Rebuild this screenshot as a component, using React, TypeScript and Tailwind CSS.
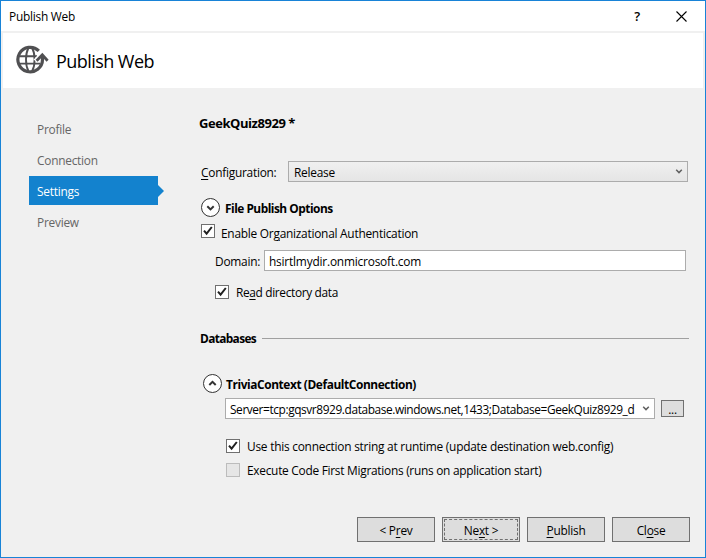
import type { ReactNode } from "react";

function Tick({ checked = true }: { checked?: boolean }) {
  return (
    <span
      className={`flex h-[14px] w-[14px] shrink-0 items-center justify-center border ${
        checked ? "border-[#707070] bg-white" : "border-[#bcbcbc] bg-[#e6e6e6]"
      }`}
    >
      {checked && (
        <svg width="12" height="12" viewBox="0 0 12 12" fill="none" stroke="#212121" strokeWidth="2">
          <path d="M2 5.6 4.6 8.6 9.8 2" />
        </svg>
      )}
    </span>
  );
}

function Expander({ up = false }: { up?: boolean }) {
  return (
    <svg className="shrink-0" width="19" height="19" viewBox="0 0 19 19" fill="none">
      <circle cx="9.5" cy="9.5" r="9" fill="#fff" stroke="#333" />
      <path d={up ? "M6.3 11 9.5 7.9 12.7 11" : "M6.3 8.3 9.5 11.4 12.7 8.3"} stroke="#333" strokeWidth="2" />
    </svg>
  );
}

function Arrow() {
  return (
    <svg className="shrink-0" width="8" height="6" viewBox="0 0 8 6" fill="none" stroke="#606060" strokeWidth="1.5">
      <path d="M1.2.8 4 3.6 6.8.8" />
    </svg>
  );
}

function Button({ children, focused = false }: { children: ReactNode; focused?: boolean }) {
  return (
    <button className="h-[25px] w-[78px] border border-[#707070] bg-[#dddddd] p-px tracking-[-0.25px]">
      <span
        className={`flex h-full w-full items-center justify-center whitespace-pre border ${
          focused ? "border-dashed border-[#707070]" : "border-transparent"
        }`}
      >
        {children}
      </span>
    </button>
  );
}

function GlobeIcon() {
  return (
    <svg className="-mt-px" width="34" height="30" viewBox="0 0 34 30" fill="none" stroke="#505052">
      <path d="M4 11.2H22M4 18.6H25" strokeWidth="1.9" />
      <path d="M13.4 3C10.2 9 10.2 20 13.4 26M17.2 3C20.4 9 20.4 20 17.2 26" strokeWidth="1.9" />
      <path d="M19.8 15.6 27.3 7.4 33 13.5" stroke="#fff" strokeWidth="3" />
      <path d="M23.8 5.8A12.3 12.3 0 1 0 27.5 14.5L27.3 11" strokeWidth="3.2" />
      <path d="M21.6 15.8 27.3 9.8 32.6 15.8" strokeWidth="2.8" />
    </svg>
  );
}

const steps = ["Profile", "Connection", "Settings", "Preview"];
const u = "underline decoration-1 underline-offset-2";

export default function App() {
  return (
    <div className="flex h-[558px] w-[706px] flex-col overflow-hidden border border-[#1883d7] bg-[#f0f0f0] font-['Open_Sans','Noto_Sans',sans-serif] text-[11.9px] leading-4 tracking-[-0.25px] text-black">
      <div className="flex h-[30px] shrink-0 items-center bg-white pl-2">
        <span>Publish Web</span>
        <span className="ml-auto text-[13px] font-semibold">?</span>
        <svg className="mr-[18px] ml-9" width="11" height="11" viewBox="0 0 11 11" stroke="#000" strokeWidth="1.1">
          <path d="M.5.5 10.5 10.5M10.5.5.5 10.5" />
        </svg>
      </div>
      <div className="mx-[2px] mt-[2px] flex h-[55px] shrink-0 items-center bg-white pl-[12px]">
        <GlobeIcon />
        <span className="ml-[7px] text-[18px] leading-6 tracking-[-0.55px]">Publish Web</span>
      </div>
      <div className="flex min-h-0 flex-1">
        <nav className="flex w-[198px] shrink-0 flex-col gap-[2px] pt-[26px] pl-[28px] text-[#666]">
          {steps.map((step) => (
            <div key={step} className="flex h-[29px] items-center">
              <div className={`flex h-full w-[129px] items-center pl-2 ${step === "Settings" ? "bg-[#1382ce] text-white" : ""}`}>
                {step}
              </div>
              {step === "Settings" && (
                <svg width="6" height="12" viewBox="0 0 6 12" fill="#1382ce">
                  <path d="M0 0 6 6 0 12Z" />
                </svg>
              )}
            </div>
          ))}
        </nav>
        <main className="flex min-w-0 flex-1 flex-col whitespace-nowrap">
          <h1 className="mt-[27px] h-4 text-[13px] font-bold tracking-[-0.45px]">GeekQuiz8929 *</h1>
          <div className="mt-[30px] ml-[2px] flex h-[21px] items-center">
            <span className="w-[87px]"><span className={u}>C</span>onfiguration:</span>
            <div className="flex h-[21px] w-[400px] items-center justify-between border border-[#acacac] bg-linear-to-b from-[#f0f0f0] to-[#e5e5e5] pr-[4px] pl-[5px]">
              Release
              <Arrow />
            </div>
          </div>
          <div className="mt-4 ml-[2px] flex h-[19px] items-center gap-[5px] font-bold tracking-[-0.5px]">
            <Expander />
            File Publish Options
          </div>
          <div className="mt-[7px] ml-[2px] flex h-[14px] items-center gap-[6px]">
            <Tick />
            <span className="pt-[4px]">Enable Or<span className={u}>g</span>anizational Authentication</span>
          </div>
          <div className="mt-3 ml-4 flex h-[21px] items-center">
            <span className="w-[49px]">Domain:</span>
            <div className="flex h-[21px] w-[422px] items-center border border-[#acacac] bg-white pl-1">
              <span className="tracking-[-0.2px]">hsirtlmydir.onmicrosoft.com</span>
            </div>
          </div>
          <div className="mt-[14px] ml-4 flex h-[14px] items-center gap-[7px]">
            <Tick />
            <span className="tracking-[-0.35px]">Re<span className={u}>a</span>d directory data</span>
          </div>
          <div className="mt-[31px] ml-px flex h-4 items-center">
            <span className="w-[62px] font-bold tracking-[-0.65px]">Databases</span>
            <span className="h-px w-[427px] bg-[#a0a0a0]" />
          </div>
          <div className="mt-[28px] ml-1 flex h-[19px] items-center gap-1 font-bold tracking-[-0.41px]">
            <Expander up />
            TriviaContext (DefaultConnection)
          </div>
          <div className="mt-[5px] ml-[26px] flex h-[21px] items-center gap-[6px]">
            <div className="flex h-[21px] w-[430px] items-center justify-between border border-[#acacac] bg-white pr-[4px] pl-1">
              <span className="tracking-[-0.41px]">Server=tcp:gqsvr8929.database.windows.net,1433;Database=GeekQuiz8929_d</span>
              <Arrow />
            </div>
            <button className="flex h-[17px] w-[23px] items-center justify-center border border-[#707070] bg-[#dddddd]">...</button>
          </div>
          <div className="mt-5 ml-[27px] flex h-[14px] items-center gap-[7px]">
            <Tick />
            <span className="tracking-[-0.24px]">Use this connection string at runtime (update destination web.config)</span>
          </div>
          <div className="mt-[10px] ml-[27px] flex h-[14px] items-center gap-[7px]">
            <Tick checked={false} />
            <span className="tracking-[-0.27px]">Execute Code First Migrations (runs on application start)</span>
          </div>
          <footer className="mt-[40px] mr-[15px] flex justify-end gap-[7px]">
            <Button>{"< P"}<span className={u}>r</span>ev</Button>
            <Button focused>Ne<span className={u}>x</span>{"t >"}</Button>
            <Button><span className={u}>P</span>ublish</Button>
            <Button>Cl<span className={u}>o</span>se</Button>
          </footer>
        </main>
      </div>
    </div>
  );
}
